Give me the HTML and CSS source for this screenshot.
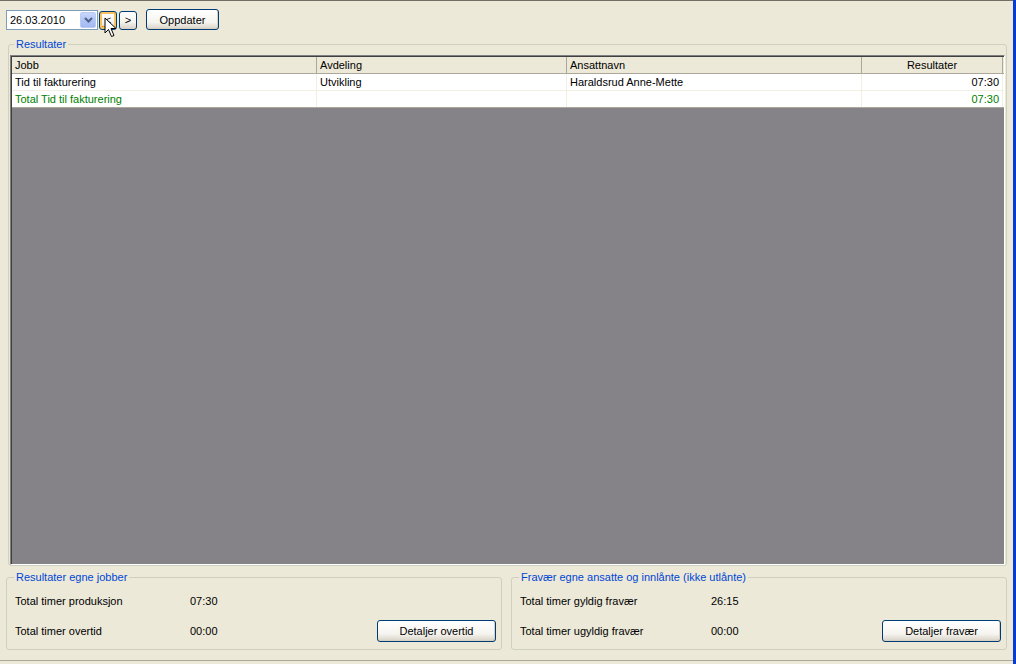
FILE: index.html
```html
<!DOCTYPE html>
<html>
<head>
<meta charset="utf-8">
<link rel="stylesheet" href="styles.css">
</head>
<body>
<div class="window">
  <div class="content">
    <div class="toolbar">
      <div class="datebox">
        <span class="datetext">26.03.2010</span>
        <span class="dropbtn"><svg width="9" height="6" viewBox="0 0 9 6"><path d="M1 1 L4.5 4.5 L8 1" fill="none" stroke="#4d6185" stroke-width="2"/></svg></span>
      </div>
      <button class="navbtn hover">&lt;</button>
      <button class="navbtn">&gt;</button>
      <button class="btn oppdater">Oppdater</button>
    </div>

    <fieldset class="group results">
      <legend>Resultater</legend>
      <div class="grid">
        <div class="row head">
          <div class="c c1">Jobb</div>
          <div class="c c2">Avdeling</div>
          <div class="c c3">Ansattnavn</div>
          <div class="c c4 center">Resultater</div>
        </div>
        <div class="row">
          <div class="c c1">Tid til fakturering</div>
          <div class="c c2">Utvikling</div>
          <div class="c c3">Haraldsrud Anne-Mette</div>
          <div class="c c4 right">07:30</div>
        </div>
        <div class="row total">
          <div class="c c1">Total Tid til fakturering</div>
          <div class="c c2"></div>
          <div class="c c3"></div>
          <div class="c c4 right">07:30</div>
        </div>
        <div class="empty"></div>
      </div>
    </fieldset>

    <div class="bottom">
      <fieldset class="group sub left">
        <legend>Resultater egne jobber</legend>
        <div class="line"><span class="lbl">Total timer produksjon</span><span class="val">07:30</span></div>
        <div class="line"><span class="lbl">Total timer overtid</span><span class="val">00:00</span><button class="btn detail">Detaljer overtid</button></div>
      </fieldset>
      <fieldset class="group sub rightg">
        <legend>Fravær egne ansatte og innlånte (ikke utlånte)</legend>
        <div class="line"><span class="lbl">Total timer gyldig fravær</span><span class="val">26:15</span></div>
        <div class="line"><span class="lbl">Total timer ugyldig fravær</span><span class="val">00:00</span><button class="btn detail">Detaljer fravær</button></div>
      </fieldset>
    </div>
  </div>
  <div class="edge"></div>

  <svg class="cursor" width="14" height="22" viewBox="0 0 14 22">
    <path d="M1 1 L1 16 L4.5 12.5 L7.5 19.5 L10 18.5 L7 11.5 L12 11.5 Z" fill="#fff" stroke="#000" stroke-width="1" stroke-linejoin="miter"/>
  </svg>
</div>
</body>
</html>
```

FILE: styles.css
```css
* { box-sizing: border-box; }
html, body { margin: 0; padding: 0; }
body {
  font-family: "Liberation Sans", Arial, sans-serif;
  font-size: 11px;
  color: #000;
  background: #ece9d8;
}
.window {
  position: relative;
  width: 1016px;
  height: 664px;
  background: #ece9d8;
  display: flex;
  overflow: hidden;
}
.content {
  flex: 1;
  display: flex;
  flex-direction: column;
  border-top: 1px solid #716f64;
  border-bottom: 1px solid #aca899;
  height: 661px;
}
.edge {
  width: 3px;
  background: #0a3ad6;
  flex: none;
}
.toolbar {
  display: flex;
  align-items: flex-start;
  padding: 7px 0 0 6px;
  height: 37px;
}
.datebox {
  width: 92px;
  height: 20px;
  margin-top: 2px;
  border: 1px solid #7f9db9;
  background: #fff;
  display: flex;
  align-items: center;
  justify-content: space-between;
  padding: 0 1px 0 3px;
}
.datetext { font-size: 11px; }
.dropbtn {
  width: 16px;
  height: 16px;
  background: linear-gradient(#c7d6fb, #b2c5f6 50%, #a3b9f1);
  border: 1px solid #b9cbf5;
  border-radius: 2px;
  display: flex;
  align-items: center;
  justify-content: center;
}
button {
  font-family: "Liberation Sans", Arial, sans-serif;
  font-size: 11px;
  color: #000;
  padding: 0;
  cursor: default;
}
.navbtn {
  width: 18px;
  height: 19px;
  margin-top: 3px;
  margin-left: 2px;
  border: 1px solid #003c74;
  border-radius: 3px;
  background: linear-gradient(#ffffff, #f4f3ee 60%, #d6d0c5);
  font-size: 11px;
  line-height: 15px;
}
.navbtn.hover {
  box-shadow: inset 0 0 0 2px #f7c261, inset 0 -1px 0 2px #e89b1c;
  margin-left: 1px;
}
.btn {
  border: 1px solid #003c74;
  border-radius: 3px;
  background: linear-gradient(#ffffff, #f5f4ef 65%, #d8d2c6);
  box-shadow: inset -1px -1px 0 #d6d0c5;
}
.oppdater {
  width: 73px;
  height: 21px;
  margin-left: 9px;
  margin-top: 1px;
}
.group {
  margin: 0;
  border: 1px solid #d0d0bf;
  border-radius: 3px;
  padding: 0;
}
.group legend {
  color: #0046d5;
  padding: 0 2px;
  margin-left: 5px;
  font-size: 11px;
  line-height: 12px;
}
.results legend { margin-left: 4px; }
.results {
  margin-left: 8px;
  margin-right: 6px;
  height: 528px;
  padding: 5px 1px 0 1px;
  margin-top: 0;
}
.grid {
  border: 1px solid #808080;
  border-right-color: #fff;
  border-bottom-color: #fff;
  box-shadow: inset 1px 1px 0 #404040;
  height: 510px;
  display: flex;
  flex-direction: column;
  padding: 1px 0 0 1px;
  background: #858288;
}
.row {
  display: flex;
  height: 17px;
  background: #fff;
  border-bottom: 1px solid #f1efe2;
  flex: none;
}
.row.head {
  background: #ece9d8;
  border-bottom: 1px solid #aca899;
}
.c {
  padding: 0 3px 0 3px;
  line-height: 16px;
  white-space: nowrap;
  overflow: hidden;
  border-right: 1px solid #f1efe2;
}
.head .c { border-right: 1px solid #aca899; }
.c1 { width: 305px; }
.c2 { width: 250px; }
.c3 { width: 295px; }
.c4 { width: 141px; }
.center { text-align: center; }
.right { text-align: right; }
.total .c { color: #008000; }
.row.total { border-bottom: 1px solid #aca899; height: 17px; }
.empty { flex: 1; background: #858288; }

.bottom {
  display: flex;
  gap: 9px;
  padding: 5px 6px 0 6px;
}
.sub {
  flex: 1;
  height: 79px;
  padding: 3px 5px 0 2px;
}
.line {
  display: flex;
  align-items: center;
  height: 30px;
  padding-left: 6px;
}
.lbl { width: 175px; }
.val { flex: 1; }
.sub.rightg .lbl { width: 191px; }
.detail {
  width: 119px;
  height: 22px;
}
.cursor {
  position: absolute;
  left: 104px;
  top: 17px;
}
```
